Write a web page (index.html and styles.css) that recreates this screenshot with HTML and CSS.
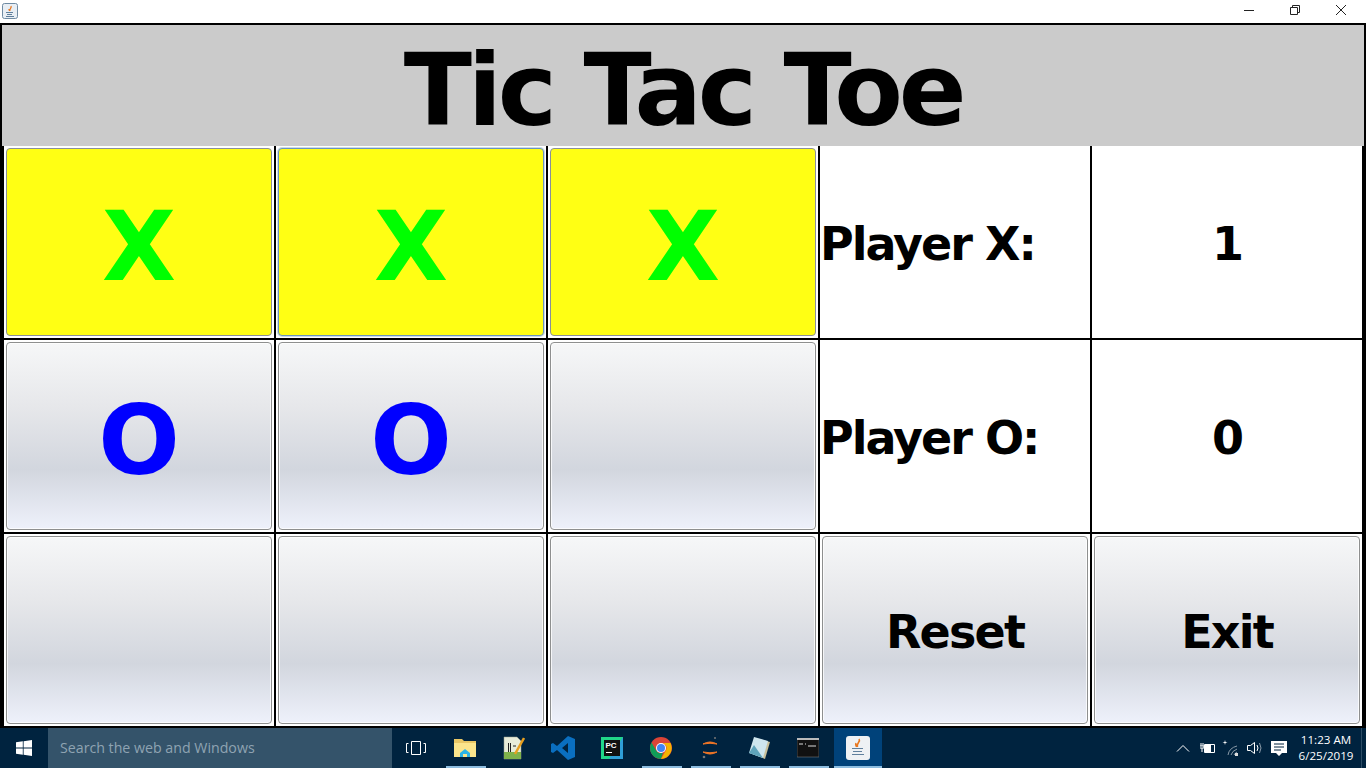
FILE: index.html
```html
<!DOCTYPE html>
<html lang="en">
<head>
  <meta charset="UTF-8">
  <title>Tic Tac Toe</title>
  <link rel="stylesheet" href="styles.css">
</head>
<body>
  <div class="titlebar">
    <svg class="app-icon" width="16" height="16" viewBox="0 0 16 16">
      <rect x="0.5" y="0.5" width="15" height="15" rx="2" fill="#e8eef4" stroke="#6f8ba3"/>
      <path d="M9 3c1 2-2 3-1 5M7 6c0 1 .5 1.500 .5 2" stroke="#e8761e" stroke-width="1.300" fill="none"/>
      <path d="M4 9h7v1H4zM5 11h5v1H5zM4 13h8v1H4z" fill="#5f7f9c"/>
    </svg>
    <div class="win-buttons">
      <svg width="12" height="12" viewBox="0 0 12 12"><path d="M1 6.500h10" stroke="#222"/></svg>
      <svg width="12" height="12" viewBox="0 0 12 12"><path d="M1.500 3.500h7v7h-7zM3.500 3.500v-2h7v7h-2" stroke="#222" fill="none"/></svg>
      <svg width="12" height="12" viewBox="0 0 12 12"><path d="M1 1l10 10M11 1L1 11" stroke="#222"/></svg>
    </div>
  </div>

  <div class="frame">
    <h1 class="heading">Tic Tac Toe</h1>
    <div class="board">
      <div class="cell"><button class="btn win mark x">X</button></div>
      <div class="cell"><button class="btn win focus mark x">X</button></div>
      <div class="cell"><button class="btn win mark x">X</button></div>
      <div class="cell label">Player X:</div>
      <div class="cell score">1</div>

      <div class="cell"><button class="btn mark o">O</button></div>
      <div class="cell"><button class="btn mark o">O</button></div>
      <div class="cell"><button class="btn mark"></button></div>
      <div class="cell label">Player O:</div>
      <div class="cell score">0</div>

      <div class="cell"><button class="btn mark"></button></div>
      <div class="cell"><button class="btn mark"></button></div>
      <div class="cell"><button class="btn mark"></button></div>
      <div class="cell"><button class="btn action">Reset</button></div>
      <div class="cell"><button class="btn action">Exit</button></div>
    </div>
  </div>

  <div class="taskbar">
    <div class="start">
      <svg width="16" height="16" viewBox="0 0 16 16"><path d="M0 2.300l6.800-1v6.300H0zM7.600 1.200L16 0v7.600H7.600zM0 8.400h6.800v6.300l-6.800-1zM7.600 8.400H16V16l-8.400-1.200z" fill="#fff"/></svg>
    </div>
    <div class="search">Search the web and Windows</div>
    <div class="task-view">
      <svg width="20" height="14" viewBox="0 0 20 14"><path d="M5.500 .5h9v13h-9zM2.500 2.500H.5v9h2M17.500 2.500h2v9h-2" stroke="#fff" fill="none"/></svg>
    </div>
    <div class="apps">
      <div class="app running">
        <svg width="22" height="20" viewBox="0 0 22 20"><path d="M0 1h8l2 2h12v3H0z" fill="#e9c765"/><path d="M0 5h22v14H0z" fill="#fbe58c"/><path d="M6 19v-4l5-4 5 4v4h-3v-3h-4v3z" fill="#2cb5e8"/></svg>
      </div>
      <div class="app">
        <svg width="22" height="24" viewBox="0 0 22 24"><path d="M1 1h13l4 4v18H1z" fill="#e8ecd9" stroke="#9aa08e" stroke-width=".5"/><path d="M1 16h17v7H1z" fill="#7fb24b"/><path d="M5.500 7v9M7.500 7v9M10 10h3" stroke="#222" fill="none"/><path d="M12 18L21 2" stroke="#e8a020" stroke-width="2.500"/></svg>
      </div>
      <div class="app">
        <svg width="24" height="24" viewBox="0 0 24 24"><path d="M17 0l7 3v18l-7 3L6 14l-4 3-2-1V8l2-1 4 3zM17 7l-6 5 6 5z" fill="#0a6fc0"/></svg>
      </div>
      <div class="app">
        <svg width="22" height="22" viewBox="0 0 22 22"><rect width="22" height="22" fill="#21d789"/><path d="M22 0v22H8z" fill="#2f9fd8"/><rect x="3" y="3" width="16" height="16" fill="#111"/><text x="4.500" y="11" class="pc-text">PC</text><path d="M5 15.500h6" stroke="#fff"/></svg>
      </div>
      <div class="app running">
        <svg width="22" height="22" viewBox="0 0 22 22"><circle cx="11" cy="11" r="11" fill="#db4437"/><path d="M11 22A11 11 0 0 1 1.500 5.500L6.500 14A5 5 0 0 0 13 15.600z" fill="#0f9d58"/><path d="M11 6h9.500A11 11 0 0 1 11 22l4.500-8A5 5 0 0 0 11 6z" fill="#f4b400"/><circle cx="11" cy="11" r="5" fill="#fff"/><circle cx="11" cy="11" r="4" fill="#4285f4"/></svg>
      </div>
      <div class="app running">
        <svg width="18" height="24" viewBox="0 0 18 24"><path d="M2 8q7-4 14 0-7-1.500-14 0zM2 16q7 4 14 0-7 1.500-14 0z" fill="#f37726" stroke="#f37726"/><circle cx="14" cy="2" r="1" fill="#777"/><circle cx="3" cy="21" r="1.300" fill="#777"/></svg>
      </div>
      <div class="app running">
        <svg width="22" height="22" viewBox="0 0 22 22"><path d="M7 1l15 4-5 17L2 16z" fill="#c9c09a"/><path d="M6 0l14 4-5 17L1 16z" fill="#cfe6ee"/><path d="M1 16l5-8 9 13z" fill="#5fa4bb"/></svg>
      </div>
      <div class="app running">
        <svg width="22" height="20" viewBox="0 0 22 20"><rect width="22" height="19" fill="#111" stroke="#888" stroke-width=".5"/><rect width="22" height="2" fill="#bbb"/><path d="M2 6h4M8 6h1M11 8h8" stroke="#ddd"/></svg>
      </div>
      <div class="app active running">
        <svg class="java" width="24" height="24" viewBox="0 0 24 24"><rect width="24" height="24" rx="3" fill="#eef1f4"/><path d="M13 3c2 3-3 4-1.500 8M10 7c-1 2 .5 3 .5 4" stroke="#e8761e" stroke-width="1.600" fill="none"/><path d="M6 12h11v1H6zM7 15h9v1H7zM6 18h12v1H6z" fill="#5f7f9c"/></svg>
      </div>
    </div>
    <div class="tray">
      <div class="tray-icon"><svg width="14" height="8" viewBox="0 0 14 8"><path d="M1 7.500l6-6 6 6" stroke="#fff" fill="none"/></svg></div>
      <div class="tray-icon"><svg width="16" height="12" viewBox="0 0 16 12"><path d="M5.500 2.500h10v8h-10zM2 1v3M4 1v3M1 4h4v2H1M3 6v4" stroke="#fff" fill="none"/><path d="M6 3h6v7H6z" fill="#fff"/></svg></div>
      <div class="tray-icon"><svg width="18" height="16" viewBox="0 0 18 16"><path d="M3 0l.5 2 2 .5-2 .5L3 5l-.5-2-2-.5 2-.5z" fill="#fff"/><path d="M6 15q1-7 9-9M9 15q1-4 6-6M12 15q1-2 3-3" stroke="#8a9aa8" fill="none"/><rect x="13" y="13" width="3" height="3" fill="#ddd"/></svg></div>
      <div class="tray-icon"><svg width="16" height="14" viewBox="0 0 16 14"><path d="M.5 4.500h3l4-3v11l-4-3h-3zM10 4q2 3 0 6" stroke="#fff" fill="none"/><path d="M12.500 2q3 5 0 10" stroke="#8a9aa8" fill="none"/></svg></div>
      <div class="tray-icon"><svg width="16" height="17" viewBox="0 0 16 17"><path d="M0 1h16v12h-5l-3 3-3-3H0z" fill="#fff"/><path d="M3 4h10M3 7h10M3 10h7" stroke="#00233f"/></svg></div>
      <div class="clock"><span>11:23 AM</span><span>6/25/2019</span></div>
      <div class="show-desktop"></div>
    </div>
  </div>
</body>
</html>
```

FILE: styles.css
```css
* { box-sizing: border-box; }
html, body {
  margin: 0;
  height: 100%;
  overflow: hidden;
}
body {
  display: flex;
  flex-direction: column;
  width: 1366px;
  height: 768px;
  background: #fff;
  font-family: "DejaVu Sans", sans-serif;
}

.titlebar {
  height: 23px;
  flex: none;
  display: flex;
  justify-content: space-between;
  padding: 3px 0 0 2px;
  background: #fff;
}
.win-buttons {
  display: flex;
  gap: 34px;
  padding: 1px 19px 0 0;
}
.win-buttons svg { display: block; }
.app-icon { display: block; }

.frame {
  height: 705px;
  flex: none;
  display: flex;
  flex-direction: column;
  border: 2px solid #000;
  border-bottom: 0;
  background: #000;
}
.heading {
  height: 121px;
  flex: none;
  margin: 0;
  padding-top: 10px;
  background: #cbcbcb;
  color: #000;
  text-align: center;
  font-size: 100px;
  line-height: 111px;
  font-weight: bold;
  letter-spacing: -4.2px;
}

.board {
  flex: 1;
  display: grid;
  grid-template-columns: repeat(5, 270px);
  grid-template-rows: repeat(3, 1fr);
  gap: 2px;
  padding: 0 2px 2px;
}
.cell {
  background: #fff;
  padding: 2px;
  display: flex;
  align-items: center;
  min-width: 0;
  min-height: 0;
}
.label, .score {
  padding: 4px 0 0;
  font-size: 46px;
  font-weight: bold;
  letter-spacing: -2px;
}
.score { justify-content: center; }

.btn {
  width: 100%;
  height: 100%;
  padding: 0;
  border: 1px solid #8e8f8f;
  border-radius: 4px;
  background: linear-gradient(#f6f7f8 0%, #e6e7ea 35%, #d2d6de 68%, #eef1fb 100%);
  box-shadow: inset 0 0 0 1px rgba(255, 255, 255, .75);
  font-family: inherit;
  font-weight: bold;
  color: #000;
}
.mark {
  padding-top: 9px;
  font-size: 96px;
}
.x { color: #00ff00; }
.o { color: #0000ff; }
.win {
  background: #ffff14;
  box-shadow: none;
  border-color: #8a8f99;
}
.focus {
  border-color: #6a94bd;
  box-shadow: 0 0 0 1px rgba(106, 148, 189, .35);
}
.action {
  padding-top: 4px;
  font-size: 46px;
  letter-spacing: -1.8px;
}

.taskbar {
  height: 40px;
  flex: none;
  display: flex;
  align-items: stretch;
  background: #00233f;
}
.start {
  width: 48px;
  display: flex;
  align-items: center;
  justify-content: center;
}
.search {
  width: 344px;
  padding-left: 12px;
  background: #34536a;
  color: #8fa3b2;
  font: 14.2px/40px "Open Sans", sans-serif;
}
.task-view {
  width: 48px;
  display: flex;
  align-items: center;
  justify-content: center;
}
.apps {
  display: flex;
}
.app {
  width: 49px;
  position: relative;
  display: flex;
  align-items: center;
  justify-content: center;
}
.app.running::after {
  content: "";
  position: absolute;
  left: 6px;
  right: 3px;
  bottom: 0;
  height: 2px;
  background: #8dbde0;
}
.app.active {
  width: 48px;
  margin-left: 2px;
  background: #00427a;
}
.app.active::after { left: 0; right: 0; }
.pc-text {
  font: bold 8px "Liberation Sans", sans-serif;
  fill: #fff;
}

.tray {
  margin-left: auto;
  display: flex;
  align-items: center;
  color: #fff;
}
.tray-icon {
  width: 24px;
  display: flex;
  justify-content: center;
}
.clock {
  width: 70px;
  display: flex;
  flex-direction: column;
  align-items: center;
  font: 11.6px/16px "Open Sans", sans-serif;
}
.show-desktop {
  width: 5px;
  height: 100%;
  border-left: 1px solid #2d4d66;
}
```
